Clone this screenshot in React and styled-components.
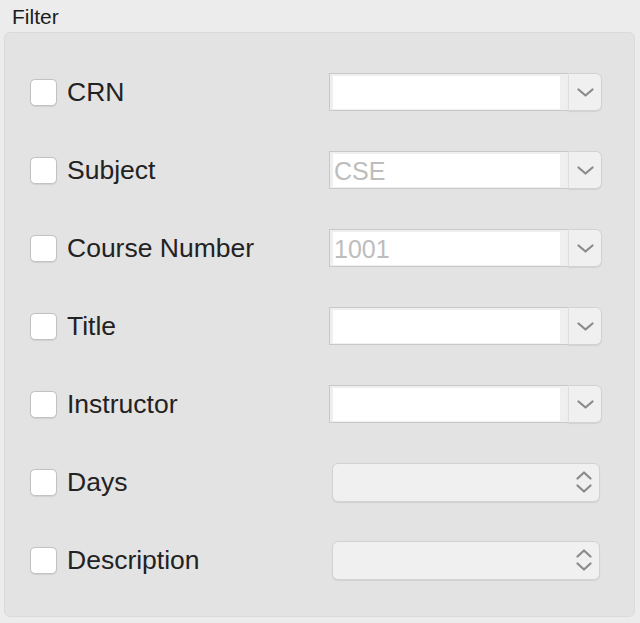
import React from "react";
import styled, { createGlobalStyle } from "styled-components";

const GlobalStyle = createGlobalStyle`
  html, body {
    margin: 0;
    padding: 0;
    background: #ececec;
  }
  body {
    font-family: "Liberation Sans", Arial, sans-serif;
  }
`;

const filters = [
  { label: "CRN", kind: "combo", value: "" },
  { label: "Subject", kind: "combo", value: "CSE" },
  { label: "Course Number", kind: "combo", value: "1001" },
  { label: "Title", kind: "combo", value: "" },
  { label: "Instructor", kind: "combo", value: "" },
  { label: "Days", kind: "popup" },
  { label: "Description", kind: "popup" },
];

function ChevronDown() {
  return (
    <svg width="17" height="9" viewBox="0 0 17 9">
      <path
        d="M1.5 1.5 L8.5 7.5 L15.5 1.5"
        fill="none"
        stroke="#8a8a8a"
        strokeWidth="2.2"
        strokeLinecap="round"
        strokeLinejoin="round"
      />
    </svg>
  );
}

function UpDown() {
  return (
    <svg width="16" height="24" viewBox="0 0 16 24">
      <path
        d="M1.5 8.5 L8 2.5 L14.5 8.5 M1.5 15.5 L8 21.5 L14.5 15.5"
        fill="none"
        stroke="#8a8a8a"
        strokeWidth="2.2"
        strokeLinecap="round"
        strokeLinejoin="round"
      />
    </svg>
  );
}

function App() {
  return (
    <>
      <GlobalStyle />
      <Window>
        <Title>Filter</Title>
        <Panel>
          {filters.map((f) => (
            <Row key={f.label}>
              <LabelCell>
                <Checkbox />
                <Label>{f.label}</Label>
              </LabelCell>
              {f.kind === "combo" ? (
                <Combo>
                  <Field>
                    <FieldInner>{f.value}</FieldInner>
                  </Field>
                  <ComboButton>
                    <ChevronDown />
                  </ComboButton>
                </Combo>
              ) : (
                <Popup>
                  <UpDown />
                </Popup>
              )}
            </Row>
          ))}
        </Panel>
      </Window>
    </>
  );
}

const Window = styled.div`
  width: 640px;
  height: 623px;
  display: flex;
  flex-direction: column;
  box-sizing: border-box;
  padding: 5px 5px 0 4px;
`;

const Title = styled.div`
  font-size: 21px;
  color: #1c1c1c;
  padding-left: 8px;
  height: 27px;
  line-height: 24px;
`;

const Panel = styled.div`
  width: 631px;
  height: 585px;
  box-sizing: border-box;
  background: #e3e3e3;
  border: 1px solid #dadada;
  border-radius: 6px;
  padding: 20px 0 0 25px;
  display: flex;
  flex-direction: column;
`;

const Row = styled.div`
  display: grid;
  grid-template-columns: 299px 273px;
  align-items: center;
  height: 78px;
`;

const LabelCell = styled.div`
  display: flex;
  align-items: center;
  gap: 10px;
`;

const Checkbox = styled.div`
  width: 27px;
  height: 27px;
  box-sizing: border-box;
  background: #ffffff;
  border: 1px solid #c2c2c2;
  border-radius: 5px;
  box-shadow: 0 0.5px 1px rgba(0, 0, 0, 0.08);
  flex: none;
`;

const Label = styled.span`
  font-size: 26.5px;
  color: #222222;
`;

const Combo = styled.div`
  display: flex;
  height: 38px;
`;

const Field = styled.div`
  flex: 1;
  box-sizing: border-box;
  background: #efefef;
  border: 1px solid #c8c8c8;
  border-right: none;
  padding: 2px 8px 1px 3px;
  display: flex;
`;

const FieldInner = styled.div`
  flex: 1;
  background: #ffffff;
  font-size: 25px;
  color: #bdbdbd;
  line-height: 34px;
  padding-left: 1px;
  overflow: hidden;
`;

const ComboButton = styled.div`
  width: 34px;
  box-sizing: border-box;
  background: #f0f0f0;
  border: 1px solid #d2d2d2;
  border-left: 1px solid #dedede;
  border-radius: 0 6px 6px 0;
  box-shadow: 0 1px 1px rgba(0, 0, 0, 0.08);
  display: flex;
  align-items: center;
  justify-content: center;
  padding-top: 1px;
`;

const Popup = styled.div`
  margin-left: 3px;
  width: 268px;
  height: 39px;
  box-sizing: border-box;
  background: #f0f0f0;
  border: 1px solid #d2d2d2;
  border-radius: 6px;
  box-shadow: 0 1px 1px rgba(0, 0, 0, 0.08);
  display: flex;
  align-items: center;
  justify-content: flex-end;
  padding-right: 7px;
`;

export default App;
